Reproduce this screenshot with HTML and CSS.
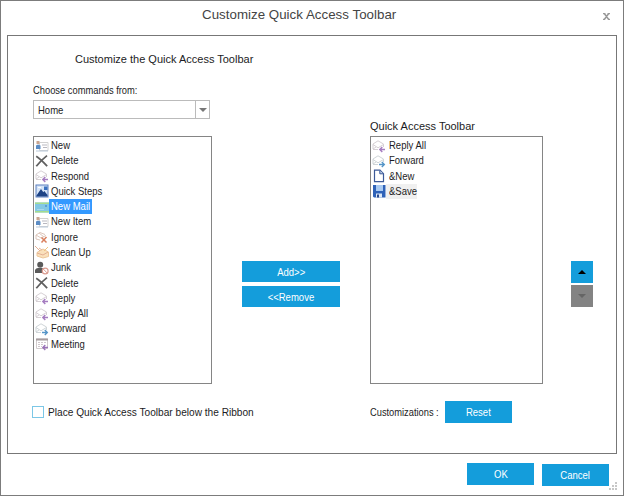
FILE: index.html
```html
<!DOCTYPE html>
<html lang="en">
<head>
<meta charset="utf-8">
<title>Customize Quick Access Toolbar</title>
<link rel="stylesheet" href="styles.css">
</head>
<body>
<svg class="defs" aria-hidden="true">
  <symbol id="contact" viewBox="0 0 14 14"><path d="M4.5 3.5H13V11.5H4.5z" fill="#fff" stroke="#d2d2d2"/><path d="M7 6h5M8 8.5h4" stroke="#b9b8c0"/><rect x="1.5" y="2" width="3" height="3" fill="#c9a590"/><path d="M1 10V6.5l2-1 2.5 1V10z" fill="#5b8cc4"/><path d="M1 12h12" stroke="#b9c9da"/></symbol>
  <symbol id="delete" viewBox="0 0 14 14"><path d="M1.2 2.3C5 4.6 8.5 8.3 12.2 12.2M12 1.6C8 4.6 4.5 8.3 1.3 12.2" fill="none" stroke="#606060" stroke-width="1.8"/></symbol>
  <symbol id="reply" viewBox="0 0 14 14"><path d="M1 10V5L6 1.8 11.5 5v3M1 5.5 6 8.8l5.5-3.3M1 10l3-2M1 10.5h5" fill="none" stroke="#d6d0d4"/><path d="M13 10.5H8M10.3 8 7.8 10.5l2.5 2.5" fill="none" stroke="#a57cc0" stroke-width="1.4"/></symbol>
  <symbol id="forward" viewBox="0 0 14 14"><path d="M1 10V5L6 1.8 11.5 5v3M1 5.5 6 8.8l5.5-3.3M1 10l3-2M1 10.5h5" fill="none" stroke="#cfd5d8"/><path d="M7 10.5h5M9.8 8l2.5 2.5L9.8 13" fill="none" stroke="#5595c8" stroke-width="1.4"/></symbol>
  <symbol id="steps" viewBox="0 0 14 14"><rect x="1" y="1" width="12" height="12" fill="#d5e4f7" stroke="#5c80c0"/><path d="M1.5 11.5 6 5l2.3 3.2 1-1.2 3.2 4v1.5h-11z" fill="#1d4385"/><path d="M9 2.5h3.5V6H9z" fill="#3971bf"/><path d="M3 3.5h3" stroke="#fff"/></symbol>
  <symbol id="mail" viewBox="0 0 14 14"><path d="M0 2.5h14v10H0z" fill="#83c8e4"/><path d="M0 2.5h14V4H0zM0 11h14v1.5H0z" fill="#a5dc8e"/><path d="M2 9.5h7" stroke="#a9d9ec"/><path d="M10 5h2v2h-2z" fill="#5b9fd6"/></symbol>
  <symbol id="ignore" viewBox="0 0 14 14"><path d="M1 5l4-2.5 5 2M1 5l5 3 5-2.5M1 5v4l4 1M4 3l5 4" fill="none" stroke="#dcc6bb"/><path d="M6.5 7.5l5 5M11.5 7l-5 5.5" stroke="#d9805f" stroke-width="1.5"/></symbol>
  <symbol id="clean" viewBox="0 0 14 14"><path d="M2 7.5 8 4l5.5 3v4.5L8 13l-6-2z" fill="#fae0bb" stroke="#edc79a"/><path d="M2 8l6 2 5-3M0 1l5 5M4 3l3 2" fill="none" stroke="#e3b094"/><path d="M9 6l4-4" stroke="#edc583"/></symbol>
  <symbol id="junk" viewBox="0 0 14 14"><circle cx="5.2" cy="3.7" r="3" fill="#5a5a5a"/><path d="M0 12V9Q1 7 3 7h4l2 1-2 4z" fill="#5a5a5a"/><circle cx="10.2" cy="10" r="2.9" fill="#fff" stroke="#dc9c90" stroke-width="1.2"/><path d="m8.2 8 4 4" stroke="#dc9c90"/></symbol>
  <symbol id="meeting" viewBox="0 0 14 14"><path d="M1.5 2h11v9.5h-11z" fill="#fff" stroke="#d2ccce"/><path d="M1 2.5h12" stroke="#a59c9e" stroke-width="2"/><path d="M3 5.5h8M3 7.5h5M3 9.5h4" stroke="#d0c8cc" stroke-dasharray="2 1"/><path d="M13 10.5H8M10.3 8 7.8 10.5l2.5 2.5" fill="none" stroke="#9a72b8" stroke-width="1.3"/></symbol>
  <symbol id="page" viewBox="0 0 14 14"><path d="M2.5 1.2H8l3.5 3.5v8H2.5z" fill="#fff" stroke="#3b5998" stroke-width="1.2"/><path d="M7.8 1.5v3.3h3.5" fill="#bccde8" stroke="#3b5998"/></symbol>
  <symbol id="save" viewBox="0 0 14 14"><path d="M1 1h12.5v12.5H2l-1-1z" fill="#2f62b8"/><path d="M4 1h7v6H4z" fill="#a9caf2"/><path d="M4 9.5h6v4H4z" fill="#dce8f7"/><path d="M5 10.5h2v3H5z" fill="#27468b"/></symbol>
</svg>

<main class="dialog">
  <header class="titlebar">
    <h1 class="title">Customize Quick Access Toolbar</h1>
    <svg class="close" viewBox="0 0 7 7"><path d="M0 .5h2.5M4.5.5H7M0 6.5h2.5M4.5 6.5H7M1.3.5l4.4 6M5.7.5l-4.4 6" stroke="#999" stroke-width="1.5"/></svg>
  </header>

  <section class="panel">
    <h2 class="heading">Customize the Quick Access Toolbar</h2>
    <div class="columns">
      <div class="commands">
        <span class="label narrow">Choose commands from:</span>
        <div class="select"><span class="narrow">Home</span><span class="drop"><i class="caret"></i></span></div>
        <ul class="list">
          <li class="row"><svg class="icon"><use href="#contact"/></svg><span class="item"><span class="narrow">New</span></span></li>
          <li class="row"><svg class="icon"><use href="#delete"/></svg><span class="item"><span class="narrow">Delete</span></span></li>
          <li class="row"><svg class="icon"><use href="#reply"/></svg><span class="item"><span class="narrow">Respond</span></span></li>
          <li class="row"><svg class="icon"><use href="#steps"/></svg><span class="item"><span class="narrow">Quick Steps</span></span></li>
          <li class="row"><svg class="icon"><use href="#mail"/></svg><span class="item selected"><span class="narrow">New Mail</span></span></li>
          <li class="row"><svg class="icon"><use href="#contact"/></svg><span class="item"><span class="narrow">New Item</span></span></li>
          <li class="row"><svg class="icon"><use href="#ignore"/></svg><span class="item"><span class="narrow">Ignore</span></span></li>
          <li class="row"><svg class="icon"><use href="#clean"/></svg><span class="item"><span class="narrow">Clean Up</span></span></li>
          <li class="row"><svg class="icon"><use href="#junk"/></svg><span class="item"><span class="narrow">Junk</span></span></li>
          <li class="row"><svg class="icon"><use href="#delete"/></svg><span class="item"><span class="narrow">Delete</span></span></li>
          <li class="row"><svg class="icon"><use href="#reply"/></svg><span class="item"><span class="narrow">Reply</span></span></li>
          <li class="row"><svg class="icon"><use href="#reply"/></svg><span class="item"><span class="narrow">Reply All</span></span></li>
          <li class="row"><svg class="icon"><use href="#forward"/></svg><span class="item"><span class="narrow">Forward</span></span></li>
          <li class="row"><svg class="icon"><use href="#meeting"/></svg><span class="item"><span class="narrow">Meeting</span></span></li>
        </ul>
      </div>
      <div class="transfer">
        <button class="btn"><span class="narrow">Add&gt;&gt;</span></button>
        <button class="btn"><span class="narrow">&lt;&lt;Remove</span></button>
      </div>
      <div class="toolbar">
        <span class="caption">Quick Access Toolbar</span>
        <ul class="list">
          <li class="row"><svg class="icon"><use href="#reply"/></svg><span class="item"><span class="narrow">Reply All</span></span></li>
          <li class="row"><svg class="icon"><use href="#forward"/></svg><span class="item"><span class="narrow">Forward</span></span></li>
          <li class="row"><svg class="icon"><use href="#page"/></svg><span class="item"><span class="narrow">&amp;New</span></span></li>
          <li class="row"><svg class="icon"><use href="#save"/></svg><span class="item current"><span class="narrow">&amp;Save</span></span></li>
        </ul>
      </div>
      <div class="order">
        <button class="move" aria-label="Move up"><i class="up"></i></button>
        <button class="move disabled" aria-label="Move down"><i class="down"></i></button>
      </div>
    </div>
    <div class="options">
      <label class="place"><span class="box"></span><span class="narrow wide">Place Quick Access Toolbar below the Ribbon</span></label>
      <div class="reset"><span class="narrow tight">Customizations :</span></div>
      <button class="btn reset-btn"><span class="narrow">Reset</span></button>
    </div>
  </section>

  <footer class="footer">
    <button class="btn ok"><span class="narrow">OK</span></button>
    <button class="btn cancel"><span class="narrow">Cancel</span></button>
    <svg class="grip" viewBox="0 0 8 8"><path d="M6 1h2M3 4h2M6 4h2M0 7h2M3 7h2M6 7h2" stroke="#b5b5b5" stroke-width="1.6"/></svg>
  </footer>
</main>
</body>
</html>
```
FILE: styles.css
```css
* { box-sizing: border-box; }
body { margin: 0; background: #fff; font: 11px/14px "Liberation Sans", Arial, sans-serif; color: #1c1c24; }
h1, h2, ul { margin: 0; padding: 0; font-weight: normal; list-style: none; }
button { border: 0; padding: 0; font: inherit; }
.defs { display: none; }

.dialog { width: 624px; height: 496px; border: 1px solid #7c7c7c; display: flex; flex-direction: column; }
.titlebar { height: 34px; flex: none; display: flex; padding: 5px 13px 0 201px; }
.title { font-size: 13.3px; line-height: 17px; color: #444; white-space: nowrap; letter-spacing: .03px; }
.close { width: 7px; height: 7px; margin: 7px 0 0 auto; }

.panel { height: 419px; flex: none; margin: 0 6px; border: 1px solid #777; padding: 16px 0 0 25px; }
.heading { padding-left: 42px; font-size: 11px; line-height: 14px; white-space: nowrap; letter-spacing: 0; }
.columns { display: flex; height: 301px; margin-top: 17px; }
.narrow { display: inline-block; white-space: nowrap; transform: scaleX(.865); transform-origin: left center; }
.commands { width: 179px; display: flex; flex-direction: column; }
.label { height: 14px; transform: scaleX(.85); }
.select { width: 177px; height: 19px; margin: 3px 0 17px; border: 1px solid #bbb; display: flex; justify-content: space-between; line-height: 18px; padding-left: 4px; }
.drop { width: 14px; border-left: 1px solid #bbb; display: flex; align-items: center; justify-content: center; }
.caret, .up, .down { width: 0; height: 0; border: 4px solid transparent; }
.caret { border-top-color: #777; border-bottom: 0; }

.list { height: 248px; border: 1px solid #858585; padding: 1px 0 0 1px; }
.row { height: 15.27px; display: flex; align-items: center; }
.icon { width: 14px; height: 14px; flex: none; }
.item { height: 15px; line-height: 15px; padding-left: 2px; }
.item.selected { width: 43px; background: #3399ff; color: #fff; }
.item.current { width: 31px; background: #f0f0f0; }

.btn { height: 21px; background: #149ddb; color: #fff; display: flex; align-items: center; justify-content: center; }
.btn .narrow { transform-origin: center; }
.transfer { width: 98px; margin: 178px 0 0 30px; display: flex; flex-direction: column; gap: 4px; }
.toolbar { width: 173px; margin: 36px 0 0 30px; display: flex; flex-direction: column; }
.caption { height: 17px; white-space: nowrap; }
.toolbar .item { padding-left: 3px; }
.order { margin: 178px 0 0 28px; display: flex; flex-direction: column; gap: 2px; }
.move { width: 22px; height: 22px; background: #149ddb; display: flex; align-items: center; justify-content: center; }
.disabled { background: #838383; }
.up { border-bottom-color: #000; border-top: 0; }
.down { border-top-color: #656565; border-bottom: 0; }

.options { display: flex; align-items: center; height: 22px; margin-top: 17px; }
.place { width: 337px; display: flex; align-items: center; gap: 4px; }
.box { width: 12px; height: 12px; margin-left: -1px; border: 1px solid #7cc7e6; }
.narrow.wide { transform: scaleX(.92); }
.narrow.tight { transform: scaleX(.845); }
.reset { width: 75px; }
.reset-btn { width: 67px; height: 22px; }

.footer { flex: 1; display: flex; justify-content: flex-end; padding: 9px 6px 0 0; }
.ok, .cancel { width: 67px; height: 22px; }
.cancel { margin: 1px 0 0 8px; }
.grip { width: 8px; height: 8px; margin-top: 19px; }
```
